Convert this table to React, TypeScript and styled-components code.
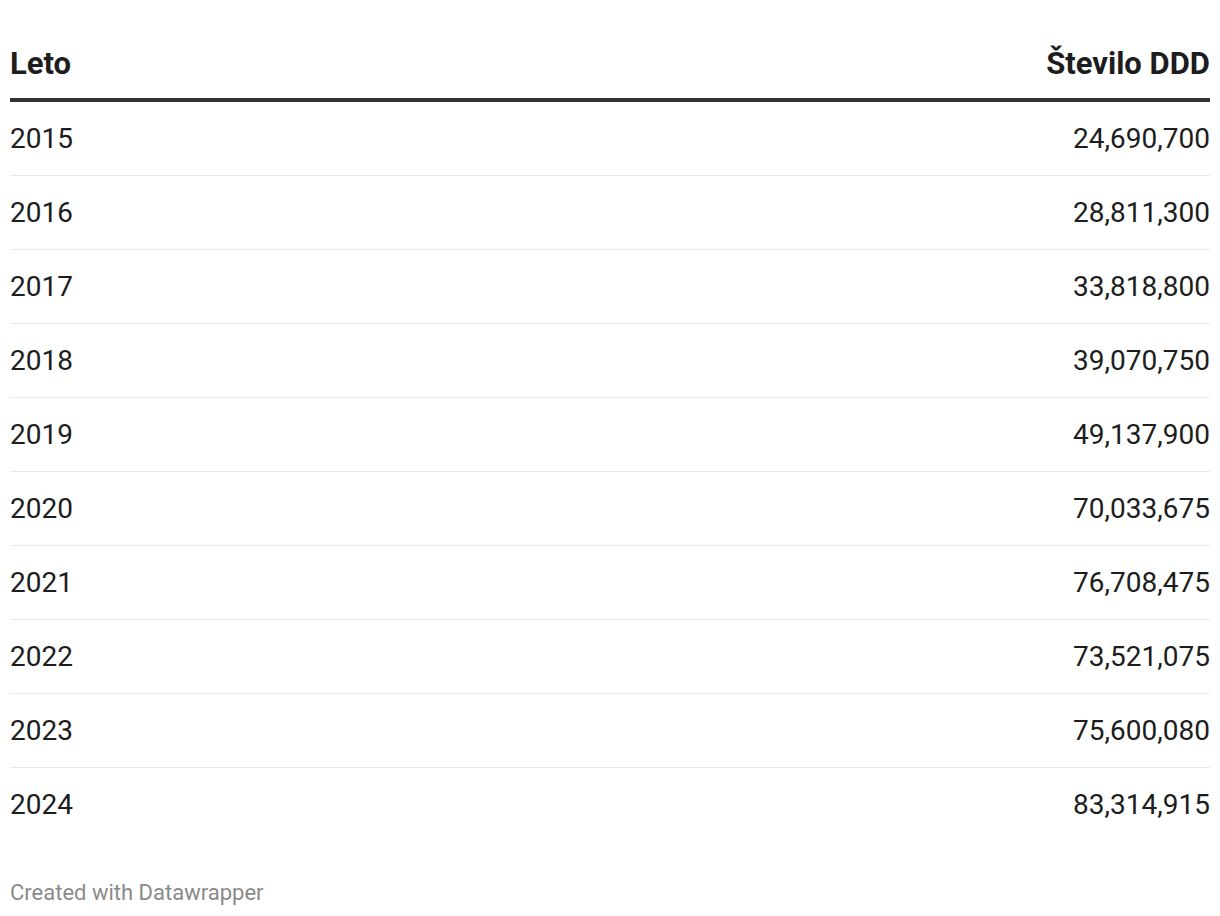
import styled, { createGlobalStyle } from "styled-components";

const GlobalStyle = createGlobalStyle`
  html,
  body {
    margin: 0;
    padding: 0;
    background: #fff;
    font-family: Roboto, "Liberation Sans", sans-serif;
  }

  * {
    box-sizing: border-box;
  }
`;

const Page = styled.div`
  padding: 32px 10px 0;
`;

const Table = styled.table`
  width: 100%;
  border-collapse: collapse;
  color: #1d1d1d;
  font-size: 28px;
  line-height: 32px;
`;

const HeadCell = styled.th<{ $right?: boolean }>`
  font-size: 31px;
  font-weight: 700;
  text-align: ${(p) => (p.$right ? "right" : "left")};
  padding: 16px 0 18px;
  border-bottom: 4px solid #333;
`;

const Row = styled.tr`
  border-bottom: 1px solid #e9e9e9;

  &:last-child {
    border-bottom: none;
  }
`;

const Cell = styled.td<{ $right?: boolean }>`
  font-weight: 400;
  text-align: ${(p) => (p.$right ? "right" : "left")};
  padding: 21px 0 20px;
  font-variant-numeric: tabular-nums;
`;

const Footer = styled.div`
  margin-top: 39px;
  font-size: 22px;
  line-height: 26px;
  color: #8a8a8a;
`;

const rows: [string, string][] = [
  ["2015", "24,690,700"],
  ["2016", "28,811,300"],
  ["2017", "33,818,800"],
  ["2018", "39,070,750"],
  ["2019", "49,137,900"],
  ["2020", "70,033,675"],
  ["2021", "76,708,475"],
  ["2022", "73,521,075"],
  ["2023", "75,600,080"],
  ["2024", "83,314,915"],
];

export default function App() {
  return (
    <>
      <GlobalStyle />
      <Page>
        <Table>
          <thead>
            <tr>
              <HeadCell>Leto</HeadCell>
              <HeadCell $right>Število DDD</HeadCell>
            </tr>
          </thead>
          <tbody>
            {rows.map(([year, value]) => (
              <Row key={year}>
                <Cell>{year}</Cell>
                <Cell $right>{value}</Cell>
              </Row>
            ))}
          </tbody>
        </Table>
        <Footer>Created with Datawrapper</Footer>
      </Page>
    </>
  );
}
